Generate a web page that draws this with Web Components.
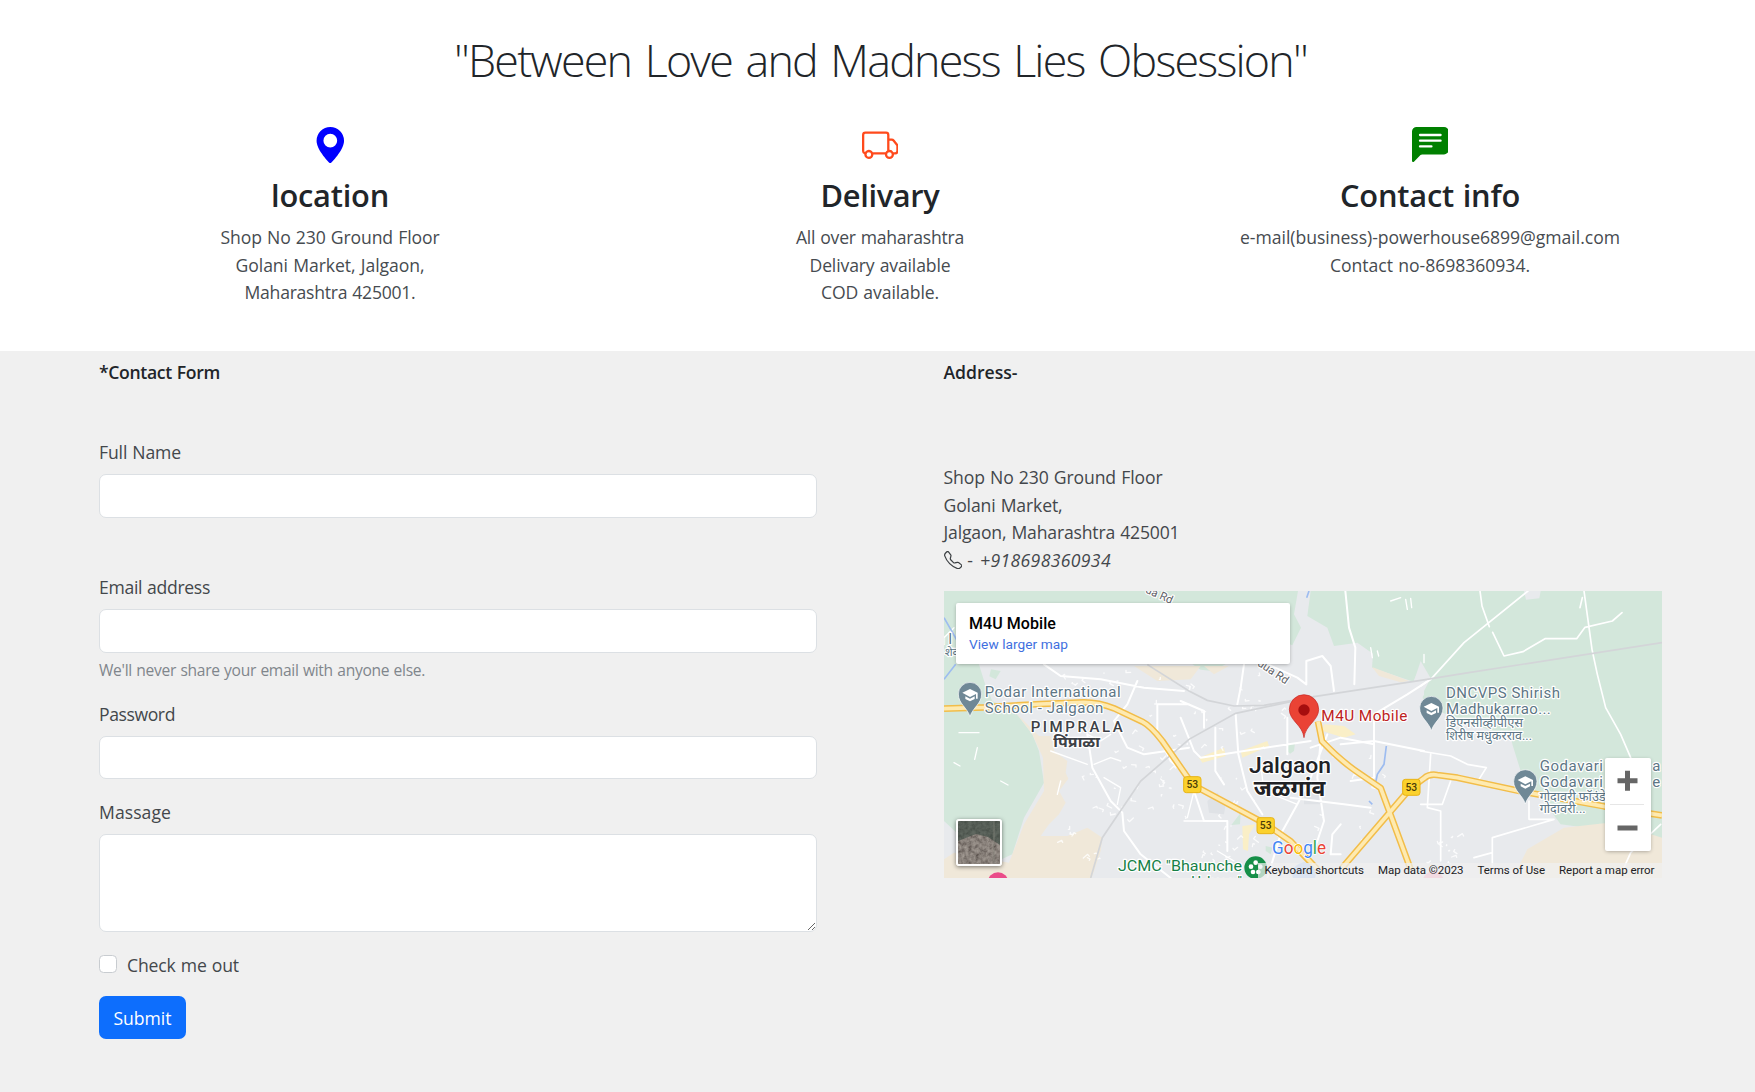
<!DOCTYPE html>
<html lang="en">
<head>
<meta charset="utf-8">
<title>Contact</title>
<style>
html,body{margin:0;background:#f0f0f0;overflow:hidden}
body{font-family:"Open Sans","Noto Sans",sans-serif;font-size:17.6px;line-height:27.43px;word-spacing:.04em;color:#43474b;--drop:1px}
</style>
</head>
<body>
<contact-page></contact-page>
<script>
const define=(name,html,setup)=>customElements.define(name,class extends HTMLElement{
  connectedCallback(){
    if(this.shadowRoot)return;
    this.attachShadow({mode:'open'}).innerHTML=html;
    if(setup)setup(this,this.shadowRoot);
  }
});

/* One line of text, tracked so that it fills the width given in "w". */
define('text-line',`<style>:host{display:block;white-space:nowrap;padding-top:var(--drop);margin-bottom:calc(0px - var(--drop))}span{display:inline-block}</style><span><slot></slot></span>`,(el,root)=>{
  const span=root.querySelector('span'),target=parseFloat(el.getAttribute('w'));
  const n=el.textContent.length,width=span.getBoundingClientRect().width;
  if(target&&width)span.style.letterSpacing=((target-width)/n).toFixed(4)+'px';
});

const icons={
  pin:'<path fill="blue" d="M8 16s6-5.686 6-10A6 6 0 0 0 2 6c0 4.314 6 10 6 10zm0-7a3 3 0 1 1 0-6 3 3 0 0 1 0 6z"/>',
  truck:'<path fill="#ff4a1c" d="M0 3.5A1.5 1.5 0 0 1 1.5 2h9A1.5 1.5 0 0 1 12 3.5V5h1.02a1.5 1.5 0 0 1 1.17.563l1.481 1.85a1.5 1.5 0 0 1 .329.938V10.500a1.5 1.5 0 0 1-1.500 1.500H14a2 2 0 1 1-4 0H5a2 2 0 1 1-3.998-.085A1.5 1.500 0 0 1 0 10.500v-7zm1.294 7.456A1.999 1.999 0 0 1 4.732 11h5.536a2.010 2.010 0 0 1 .732-.732V3.500a.5.5 0 0 0-.5-.5h-9a.5.5 0 0 0-.5.5v7a.5.5 0 0 0 .294.456zM12 10a2 2 0 0 1 1.732 1h.768a.5.5 0 0 0 .5-.5V8.350a.5.5 0 0 0-.110-.312l-1.480-1.850A.5.5 0 0 0 13.020 6H12v4zm-9 1a1 1 0 1 0 0 2 1 1 0 0 0 0-2zm9 0a1 1 0 1 0 0 2 1 1 0 0 0 0-2z"/>',
  chat:'<path fill="green" d="M0 2a2 2 0 0 1 2-2h12a2 2 0 0 1 2 2v8a2 2 0 0 1-2 2H4.414a1 1 0 0 0-.707.293L.854 15.146A.5.5 0 0 1 0 14.793V2zm3.500 1a.5.5 0 0 0 0 1h9a.5.5 0 0 0 0-1h-9zm0 2.500a.5.5 0 0 0 0 1h9a.5.5 0 0 0 0-1h-9zm0 2.500a.5.5 0 0 0 0 1h5a.5.5 0 0 0 0-1h-5z"/>',
  phone:'<path fill="#3c4043" d="M3.654 1.328a.678.678 0 0 0-1.015-.063L1.605 2.300c-.483.484-.661 1.169-.450 1.770a17.568 17.568 0 0 0 4.168 6.608 17.569 17.569 0 0 0 6.608 4.168c.601.211 1.286.033 1.770-.450l1.034-1.034a.678.678 0 0 0-.063-1.015l-2.307-1.794a.678.678 0 0 0-.580-.122l-2.190.547a1.745 1.745 0 0 1-1.657-.459L5.482 8.062a1.745 1.745 0 0 1-.460-1.657l.548-2.190a.678.678 0 0 0-.122-.580L3.654 1.328zM1.884.511a1.745 1.745 0 0 1 2.612.163L6.290 2.980c.329.423.445.974.315 1.494l-.547 2.190a.678.678 0 0 0 .178.643l2.457 2.457a.678.678 0 0 0 .644.178l2.189-.547a1.745 1.745 0 0 1 1.494.315l2.306 1.794c.829.645.905 1.870.163 2.611l-1.034 1.034c-.740.740-1.846 1.065-2.877.702a18.634 18.634 0 0 1-7.010-4.420 18.634 18.634 0 0 1-4.420-7.009c-.362-1.030-.037-2.137.703-2.877L1.885.511z"/>'
};
define('line-icon',`<style>:host{display:block;flex:none}svg{display:block;width:100%;height:100%}</style><svg viewBox="0 0 16 16"></svg>`,(el,root)=>{
  root.querySelector('svg').innerHTML=icons[el.getAttribute('name')]||'';
});

define('info-card',`<style>
:host{display:flex;flex-direction:column;align-items:center;text-align:center}
line-icon{width:36.6px;height:36.6px;margin-bottom:12.4px}
::slotted(h2){margin:0 0 9.3px!important;font-size:30.8px;line-height:38.4px;font-weight:600;color:#212529}
</style><line-icon></line-icon><slot name="title"></slot><slot></slot>`,(el,root)=>root.querySelector('line-icon').shadowRoot.querySelector('svg').innerHTML=icons[el.getAttribute('icon')]);

define('form-field',`<style>
:host{display:block}
.label{display:block;margin-bottom:8.6px}
input,textarea{display:block;box-sizing:border-box;width:100%;height:43.4px;margin:0;padding:7px 14px;border:1px solid #dce0e4;border-radius:7px;background:#fff;font:inherit;outline:0}
textarea{height:98px;resize:vertical}
.help{display:block;margin-top:4.7px;font-size:15.6px;line-height:24px;color:#80868c}
</style><label><span class="label"><slot></slot></span></label><div class="help" hidden></div>`,(el,root)=>{
  const type=el.getAttribute('type');
  const field=document.createElement(type==='textarea'?'textarea':'input');
  if(type!=='textarea')field.type=type;
  root.querySelector('label').append(field);
  const help=el.getAttribute('help');
  if(help){const h=root.querySelector('.help');h.hidden=false;h.innerHTML='<text-line w="326">'+help+'</text-line>';}
});

define('check-field',`<style>
:host{display:block}label{display:flex;gap:9.7px;align-items:flex-start}
input{appearance:none;box-sizing:border-box;width:18.3px;height:18.3px;margin:4px 0 0;border:1px solid #c8ccd0;border-radius:4.5px;background:#fff}
</style><label><input type="checkbox"><slot></slot></label>`);

define('submit-button',`<style>
:host{display:block}
button{display:flex;align-items:center;justify-content:center;width:87px;height:43.4px;padding:0;border:0;border-radius:7px;background:#0d6efd;color:#fff;font:inherit}
</style><button type="button"><slot></slot></button>`);

define('contact-form',`<style>
:host{display:block}.heading{font-weight:600;color:#212529;margin-bottom:51.6px}
.name{margin-bottom:55.6px}.gap{margin-bottom:18.6px}check-field{margin-bottom:17.6px}
</style>
<text-line class="heading" w="121">*Contact Form</text-line>
<form-field class="name" type="text"><text-line w="82">Full Name</text-line></form-field>
<form-field class="gap" type="email" help="We'll never share your email with anyone else."><text-line w="111">Email address</text-line></form-field>
<form-field class="gap" type="password"><text-line w="76">Password</text-line></form-field>
<form-field class="gap" type="textarea"><text-line w="72">Massage</text-line></form-field>
<check-field><text-line w="112">Check me out</text-line></check-field>
<submit-button><text-line w="58">Submit</text-line></submit-button>`);

/* Marker symbols and shields of the map, in map units (three per pixel). */
const school=(x,y)=>`<g transform="translate(${x} ${y})"><path fill="#6f8896" stroke="#fff" stroke-width="2" d="M0 103C-8 76-35 64-35 35a35 35 0 0 1 70 0C35 64 8 76 0 103z"/><path fill="#fff" d="M-23 31 0 20 23 31V49H18V35L0 44zM-14 42 0 49 14 42V50L0 57-14 50z"/></g>`;
const shield=(x,y)=>`<g><rect x="${x-26}" y="${y-24}" width="52" height="48" rx="8" fill="#fbd12d" stroke="#e8b416" stroke-width="3"/><text x="${x}" y="${y+10}" font-size="31" font-weight="500" text-anchor="middle" fill="#4a3d08">53</text></g>`;
/* Short lane stubs scattered round the built-up areas. */
const lanes=(()=>{let s=11,d='';const r=()=>(s=(s*16807)%2147483647)/2147483647;
  const put=(n,x,y,w,h)=>{for(let i=0;i<n;i++){const a=x+r()*w,b=y+r()*h,c=r()*30-15,e=r()*24-12;d+=`M${a|0} ${b|0}l${c|0} ${e|0}l${(-e/2)|0} ${(c/2)|0}`;}};
  put(30,420,460,270,240);put(30,560,240,460,240);put(24,700,560,260,250);put(14,990,480,330,290);put(10,1430,730,120,90);put(8,330,690,140,130);put(10,300,240,230,80);return d;})();
const highways='M0 353 120 349 290 339 420 334Q465 334 510 352L595 392Q620 405 655 450L735 565 745 581 965 699 1040 751 1120 835M1122 391 1134 451Q1180 500 1230 536L1310 591 1400 835M1195 830 1400 591 1440 562Q1455 548 1480 552L1540 560 1730 601 1980 646 2154 673';

define('location-map',`<style>
:host{display:block;position:relative;height:287px;overflow:hidden;font-family:Roboto,"Noto Sans",sans-serif;line-height:1;word-spacing:0;color:#202124;--drop:0px}
svg.map{display:block;width:100%;height:100%}
.card{position:absolute;left:12px;top:12px;width:334.500px;height:61px;padding:13px 13.500px 0;box-sizing:border-box;background:#fff;border-radius:2px;box-shadow:0 1px 4px -1px rgba(0,0,0,.4)}
.card b{display:block;font-weight:500;font-size:16px;line-height:16px;color:#000}
.card a{display:block;font-size:13.7px;line-height:16px;margin-top:4px;color:#3f6fe0}
.sat{position:absolute;left:12px;top:228px;width:46px;height:47px;box-sizing:border-box;border:2px solid #fff;border-radius:3px;overflow:hidden;box-shadow:0 1px 4px rgba(0,0,0,.5)}
.sat svg{display:block}
.zoom{position:absolute;left:661.5px;top:167px;width:45.5px;height:93px;background:#fff;border-radius:2px;box-shadow:0 1px 4px -1px rgba(0,0,0,.4)}
.zoom svg{display:block}
.legal{position:absolute;right:0;bottom:0;height:15px;display:flex;background:rgba(240,240,240,.72);font-size:11.5px;line-height:15px;color:#202124}
.legal span{box-sizing:border-box;padding:0 7px;text-align:center}
</style>
<svg class="map" viewBox="0 0 2154 861" preserveAspectRatio="none">
<rect width="2154" height="861" fill="#e8eaed"/>
<g fill="#d3e7db">
<path d="M0 0H1062L1050 70 1071 110 1045 163 985 140H80L125 285 145 330 215 365 265 430 285 480 300 575 240 680 205 790 140 820 0 690z"/>
<path d="M141 235 136 256 155 265 170 240z"/>
<path d="M1100 0H1740L1746 26 1786 22 1790 0H2154V861L1960 715 1850 700 1730 540 1705 460 1700 440 1560 360 1450 345 1430 240 1434 214 1408 272 1284 230 1287 188 1240 155 1170 165 1150 110 1090 75z"/>
<path d="M1430 350 1439 322 1480 240 1430 210z"/>
<path d="M745 220H845L805 240 770 236z"/>
<path d="M1033 462 1053 456 1050 480 1038 488 1030 480zM862 702 890 665 888 700zM965 765 985 770 980 790 965 780z"/></g>
<path fill="#e8eaed" d="M1430 210 1460 262 1440 300 1440 345 1560 360 1700 440 1705 460 1400 460 1400 300z"/>
<path fill="#d3e7db" d="M1440 345 1436 318 1470 262 1560 200 1760 330 1720 470 1700 440z"/>
<path fill="#f0e8d9" d="M215 365 285 435H320L330 480 370 510 365 545 373 563 345 600 365 635 345 670 315 700 290 735 370 735 430 710 475 740 470 780 443 861H0V805L30 785 195 815 240 700 300 600 297 500 265 430zM570 225H770L740 265 640 270zM1284 228 1395 270 1370 274 1305 255zM1722 830 1750 775 1860 710 1980 697 2090 720 2154 740V861H1740zM780 225H855L810 250z"/>
<g fill="#dfe2e6"><path d="M790 630 820 605 845 640 840 670 795 665zM1080 600H1130V640H1080z"/></g>
<g fill="#faefc7"><path d="M765 500 840 470 845 495 775 515zM890 480 970 450 975 465 895 500zM1140 400 1200 405 1235 430 1200 440 1135 420zM895 705 935 700 915 730 912 780 897 775z"/></g>
<g fill="none" stroke="#fff" stroke-width="6" stroke-linejoin="round" stroke-linecap="round">
<path d="M1204 0 1215 110 1234 170 1231 280M300 220 350 255 470 265 600 290 720 300M580 270 550 340 510 390M430 430 445 530 500 630 535 665 540 720 590 790 680 861M510 390 550 470 600 490 735 470M640 430V340H735M640 430 680 510 735 560M875 370 883 490 910 600 955 670M710 380 750 480 770 500 900 480 1100 450M814 410V540L840 580M900 220 890 290 880 340M1087 280V210L1135 195 1160 225 1170 300M1087 280 1060 260 950 210M1030 380V490M1060 640 1100 560 1150 430M1060 640 1010 730 970 861M1040 620 1200 640 1280 650M1130 450 1120 560 1140 690 1110 780M1100 470 1190 440 1290 460V560L1220 570M1190 460 1290 450 1440 480M1290 370 1390 310 1460 265M1290 460V390M1190 700 1165 730 1160 790 1190 790M710 330 780 360V410M750 600 780 690H850V780"/>
<path stroke-width="5" d="M1752 0 1560 155 1465 260 1430 285M1608 0 1614 45 1636 107M1646 124 1680 195 1737 182 1803 143H1898L1923 109 2005 90 2034 65M1920 0 1944 175 1960 250 1985 350 2030 430 2060 500M1429 480 1520 495 1570 520 1627 530 1605 565M1460 490 1450 650 1490 660V810M1430 640H1495L1520 570M1755 630V685H1830L1645 740V825M1590 800 1645 785M1915 20 1908 50M2150 700 2060 785 2040 830"/>
<path stroke-width="4" d="M0 140 30 110M430 430 470 450 500 430M450 520 500 500 530 510M320 480 430 520M340 610 350 570M480 560 530 590 520 640M1440 190V215M1385 25 1390 55M1400 22 1403 50M1280 170 1285 200M1300 180 1304 195M1340 30 1370 20M45 425H105M100 470 92 505M30 515 48 525M170 570 192 582M720 690H830M750 600 730 680M950 520 960 600 1060 640M820 780 870 810"/>
<path stroke-width="4" opacity=".8" d="${lanes}"/></g>
<g fill="none" stroke="#d3d5d8" stroke-width="5"><path d="M440 861 475 740 590 570 735 445 875 367 1110 317 1430 268 1560 247 2154 155"/><path d="M610 221 735 300 790 328 870 345 960 343 1110 317"/></g>
<path d="M1327 465 1320 520 1300 550 1295 575M0 265 35 220M0 80 40 150M1275 630 1285 640M1088 20 1095 0" fill="none" stroke="#9dbcf0" stroke-width="5"/>
<path d="${highways}" fill="none" stroke="#f2bd49" stroke-width="20" stroke-linejoin="round"/>
<path d="${highways}" fill="none" stroke="#feeab0" stroke-width="11" stroke-linejoin="round"/>
<circle cx="162" cy="875" r="31" fill="#ea4c89"/><circle cx="1080" cy="850" r="35" fill="#a9c5f5"/><circle cx="1468" cy="873" r="32" fill="#f5a3b9"/>
${shield(745,581)}${shield(965,704)}${shield(1402,589)}
${school(78,274)}${school(1462,316)}${school(1744,536)}
<g paint-order="stroke" stroke="#fff" stroke-width="7" stroke-linejoin="round" fill="#5d7685" font-size="45">
<text x="122" y="317" textLength="408">Podar International</text><text x="122" y="365" textLength="356">School - Jalgaon</text>
<text x="1506" y="321" textLength="342">DNCVPS Shirish</text><text x="1506" y="369" textLength="314">Madhukarrao...</text>
<text x="1506" y="408" font-size="36" textLength="231" lengthAdjust="spacingAndGlyphs">डिएनसीव्हीपीएस</text><text x="1506" y="446" font-size="36" textLength="258" lengthAdjust="spacingAndGlyphs">शिरीष मधुकरराव...</text>
<text x="1787" y="541" textLength="190">Godavari</text><text x="2125" y="541">a</text><text x="1787" y="589" textLength="190">Godavari</text><text x="2125" y="589">e</text>
<text x="1787" y="629" font-size="36" textLength="198" lengthAdjust="spacingAndGlyphs">गोदावरी फॉउंडे</text><text x="1787" y="667" font-size="36" textLength="138" lengthAdjust="spacingAndGlyphs">गोदावरी...</text>
<g fill="#3d4146" font-weight="500"><text x="260" y="423" font-size="45" textLength="276">PIMPRALA</text><text x="328" y="469" font-size="45" textLength="140" lengthAdjust="spacingAndGlyphs" font-weight="700">पिंप्राळा</text></g>
<g fill="#202124" font-weight="500"><text x="915" y="546" font-size="66" textLength="246" lengthAdjust="spacingAndGlyphs">Jalgaon</text><text x="929" y="614" font-size="66" textLength="215" lengthAdjust="spacingAndGlyphs" font-weight="700">जळगांव</text></g>
<text x="1132" y="391" font-size="46" fill="#bd2222" textLength="258">M4U Mobile</text>
<g fill="#168047"><text x="522" y="841" font-size="46" textLength="372" lengthAdjust="spacingAndGlyphs">JCMC "Bhaunche</text><text x="742" y="889" font-size="45" textLength="152">Udyan"</text></g>
<g font-size="34" fill="#5f6368"><text transform="translate(602 4) rotate(24)">da Rd</text><text transform="translate(938 222) rotate(34)">dua Rd</text></g>
<text x="-22" y="158" font-size="43">n I</text><text x="2" y="196" font-size="35">शेव</text></g>
<circle cx="935" cy="830" r="34" fill="#168f48"/><g fill="#fff"><circle cx="935" cy="815" r="7"/><circle cx="921" cy="827" r="7"/><circle cx="949" cy="827" r="7"/><circle cx="927" cy="843" r="7"/><circle cx="943" cy="843" r="7"/></g>
<path fill="#ea4335" stroke="#c5221f" stroke-width="2" d="M1080 440C1076 402 1036 389 1036 355a44 44 0 0 1 88 0C1124 389 1084 402 1080 440z"/><circle cx="1080" cy="357" r="17" fill="#a50e0e"/>
<text x="984" y="789" font-size="54" textLength="162" lengthAdjust="spacingAndGlyphs" paint-order="stroke" stroke="#fff" stroke-width="4"><tspan fill="#4285f4">G</tspan><tspan fill="#ea4335">o</tspan><tspan fill="#fbbc04">o</tspan><tspan fill="#4285f4">g</tspan><tspan fill="#34a853">l</tspan><tspan fill="#ea4335">e</tspan></text>
</svg>
<div class="card"><b><text-line w="87">M4U Mobile</text-line></b><a><text-line w="99">View larger map</text-line></a></div>
<div class="sat"><svg width="42" height="43" viewBox="0 0 42 43"><defs><filter id="grain" x="0" y="0" width="1" height="1"><feTurbulence type="fractalNoise" baseFrequency=".28" numOctaves="3" seed="4"/><feColorMatrix values=".75 0 0 0 .02 .7 0 0 0 0 .64 0 0 0 0 0 0 0 0 1"/></filter></defs><rect width="42" height="43" filter="url(#grain)"/><rect width="42" height="43" fill="#4a4440" opacity=".35"/><path d="M0 0H42V24L30 16 18 13 0 20z" fill="#354840" opacity=".6"/><path d="M36 0V43" stroke="#8c8c82" opacity=".6"/></svg></div>
<div class="zoom"><svg width="45.5" height="93" viewBox="0 0 45.5 93"><path d="M5 46.500H39" stroke="#e6e6e6"/><path d="M12.500 22.700H32.500M22.500 12.700V32.700M12.500 70H32.500" stroke="#666" stroke-width="5"/></svg></div>
<div class="legal"><span><text-line w="99.5">Keyboard shortcuts</text-line></span><span><text-line w="85.5">Map data ©2023</text-line></span><span><text-line w="67.5">Terms of Use</text-line></span><span><text-line w="95.5">Report a map error</text-line></span></div>`);

define('address-panel',`<style>
:host{display:block}.heading{font-weight:600;color:#212529;margin-bottom:76.6px}
.phone{display:flex;align-items:flex-start;margin-bottom:18px}.phone line-icon{width:18.3px;height:18.3px;margin:5.500px 5.5px 0 0}.phone i{margin-left:7px}
</style>
<text-line class="heading" w="74">Address-</text-line>
<text-line w="219">Shop No 230 Ground Floor</text-line>
<text-line w="119">Golani Market,</text-line>
<text-line w="236">Jalgaon, Maharashtra 425001</text-line>
<div class="phone"><line-icon name="phone"></line-icon><text-line>-</text-line><i><text-line w="131">+918698360934</text-line></i></div>
<location-map></location-map>`);

define('contact-page',`<style>
:host{display:block}
header{box-sizing:border-box;height:351.300px;padding:31px 50px 0 55px;background:#fff}
h1{display:flex;justify-content:center;margin:0 0 40.500px;padding-left:1px;font-size:44.8px;line-height:55px;font-weight:300;word-spacing:.08em;color:#212529}
h2{font-weight:600}
.cards{display:grid;grid-template-columns:repeat(3,1fr);color:#464b50}
main{display:grid;grid-template-columns:718px 718px;column-gap:126.500px;padding:7px 0 0 99px;height:733px;box-sizing:border-box;background:#f0f0f0}
</style>
<header>
<h1><text-line w="853">"Between Love and Madness Lies Obsession"</text-line></h1>
<div class="cards">
<info-card icon="pin"><h2 slot="title"><text-line w="118">location</text-line></h2><text-line w="219">Shop No 230 Ground Floor</text-line><text-line w="189">Golani Market, Jalgaon,</text-line><text-line w="171">Maharashtra 425001.</text-line></info-card>
<info-card icon="truck"><h2 slot="title"><text-line w="119">Delivary</text-line></h2><text-line w="168">All over maharashtra</text-line><text-line w="141">Delivary available</text-line><text-line w="118">COD available.</text-line></info-card>
<info-card icon="chat"><h2 slot="title"><text-line w="180">Contact info</text-line></h2><text-line w="380">e-mail(business)-powerhouse6899@gmail.com</text-line><text-line w="200">Contact no-8698360934.</text-line></info-card>
</div>
</header>
<main><contact-form></contact-form><address-panel></address-panel></main>`);
</script>
</body>
</html>
